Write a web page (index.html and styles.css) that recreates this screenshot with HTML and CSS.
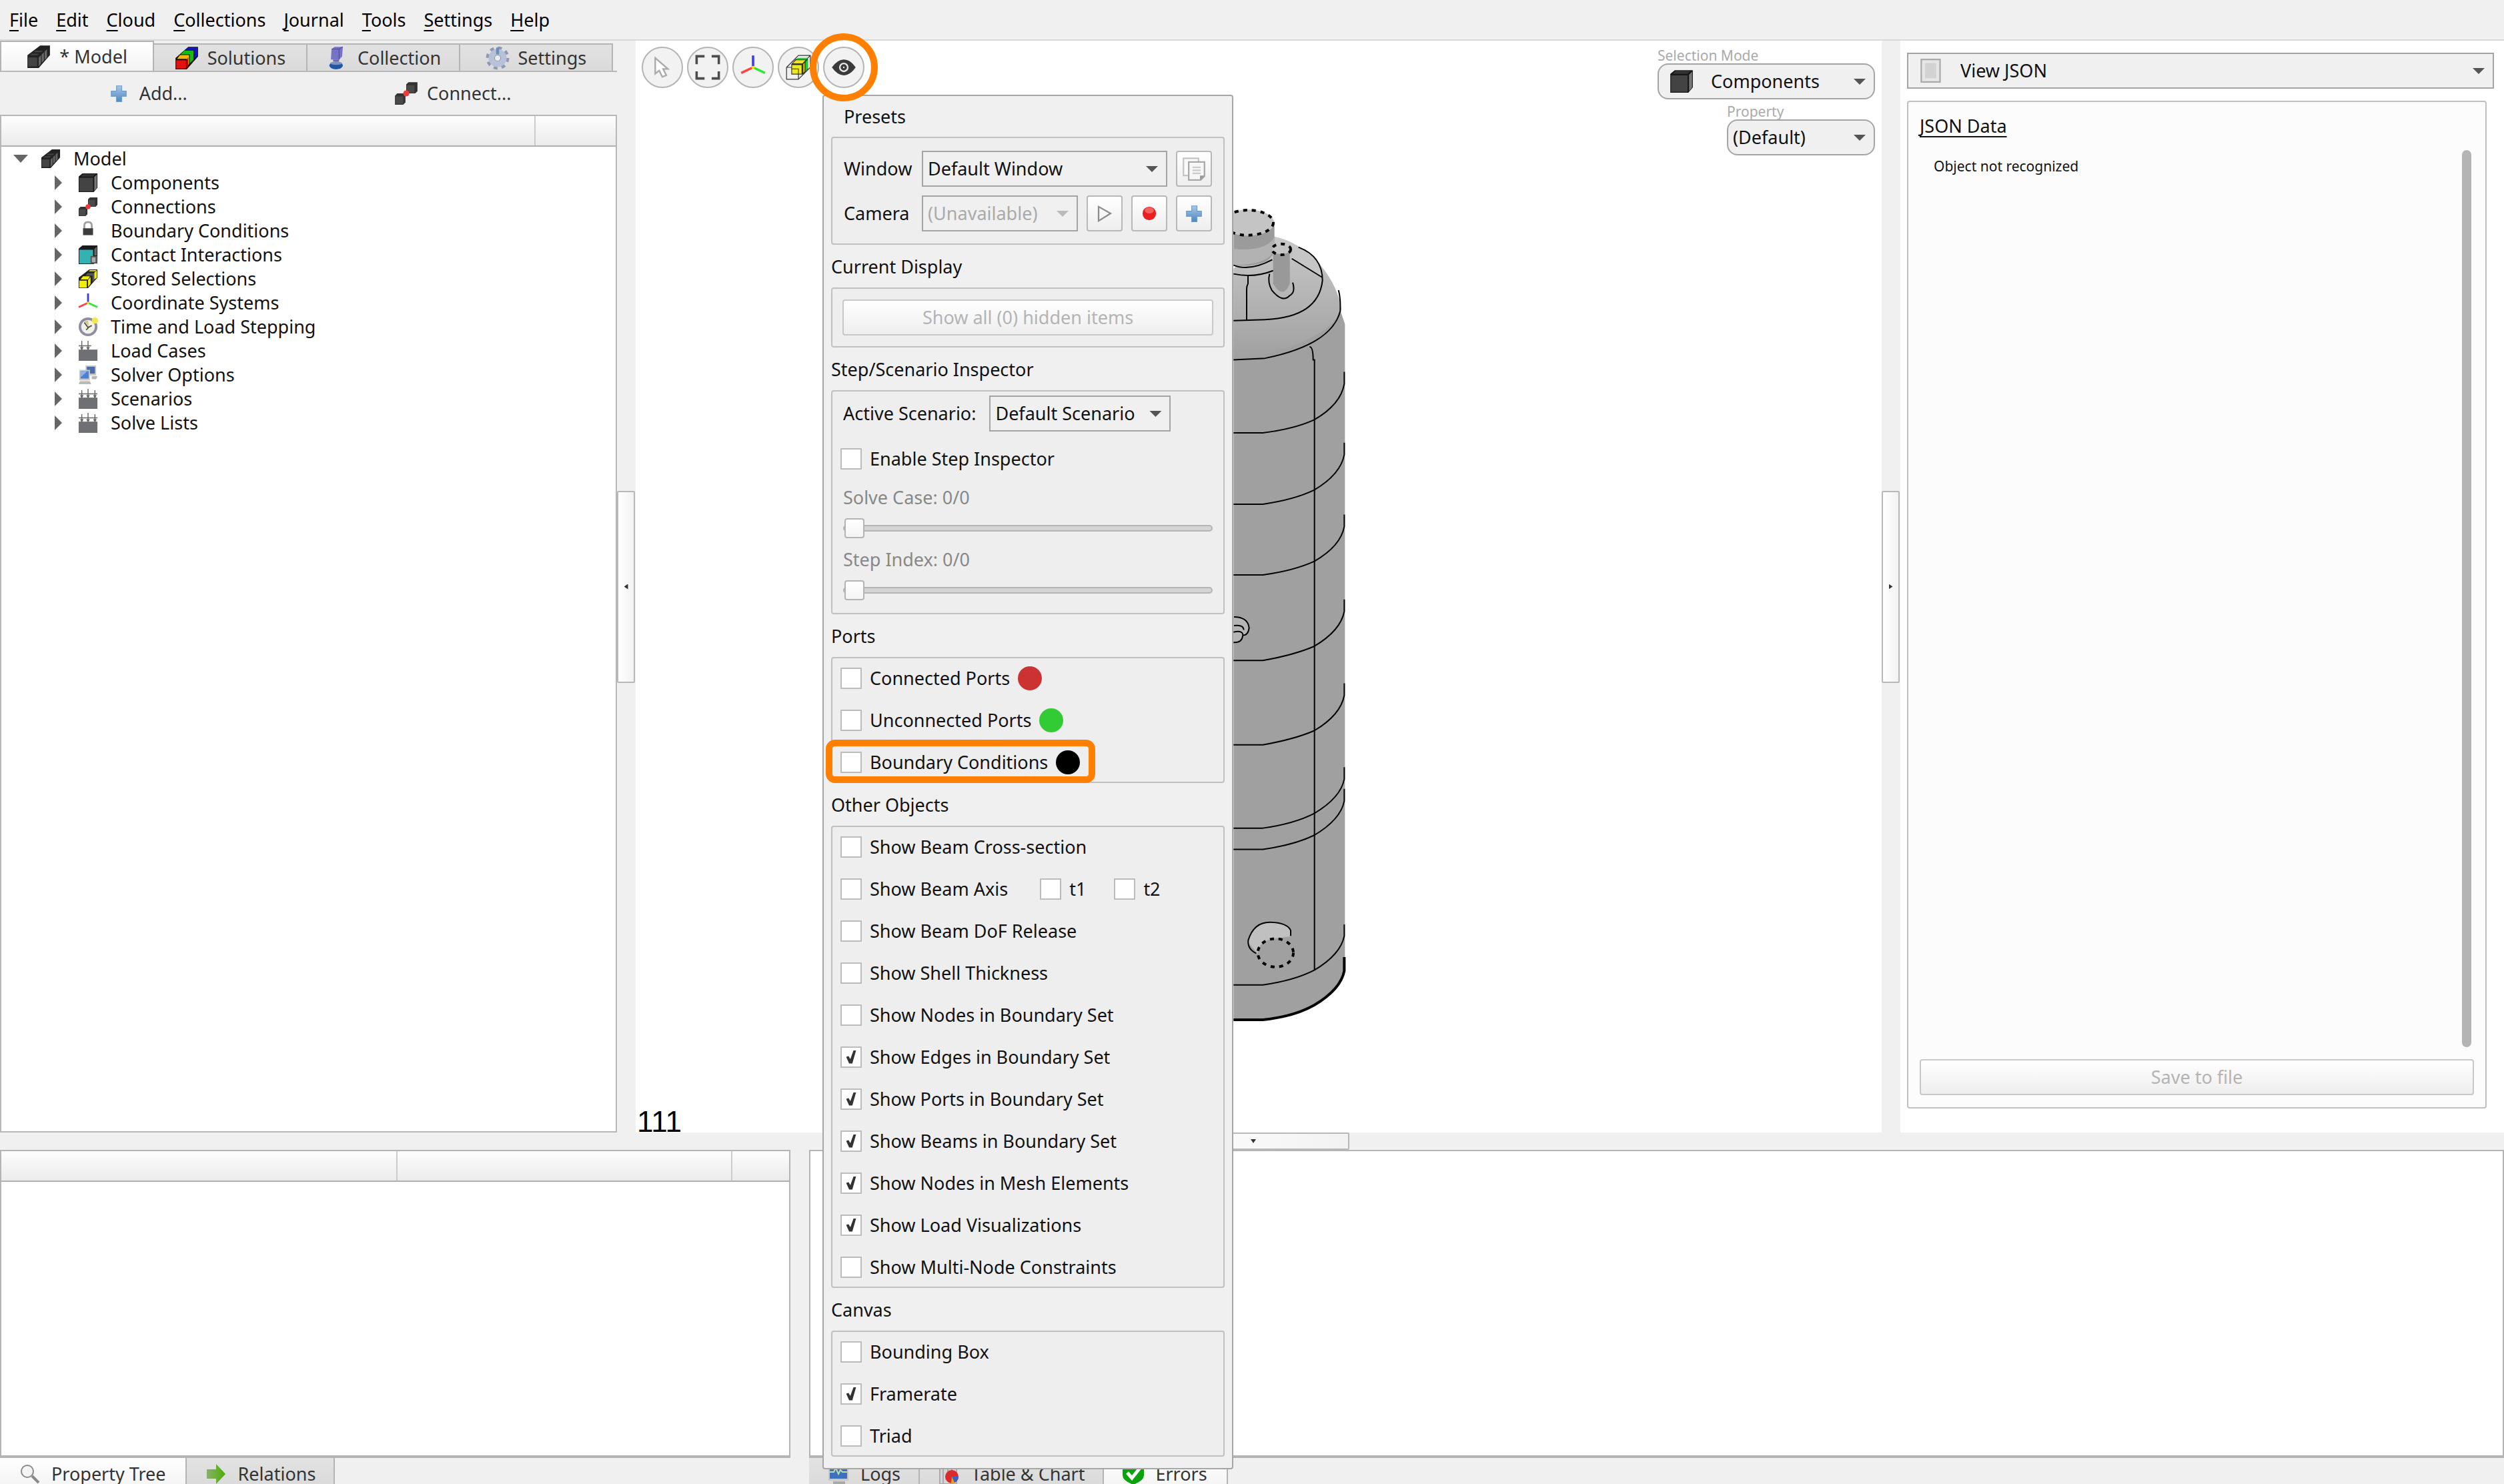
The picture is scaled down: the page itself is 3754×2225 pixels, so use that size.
FILE: index.html
```
<!DOCTYPE html>
<html lang="en">
<head>
<meta charset="utf-8">
<title>Model editor</title>
<link rel="stylesheet" href="styles.css">
</head>
<body>
<svg class="defs" aria-hidden="true">
  <defs>
    <linearGradient id="blue" x1="0" y1="0" x2="0" y2="1"><stop offset="0" stop-color="#a9c8e6"/><stop offset="1" stop-color="#4f86c0"/></linearGradient>
    <linearGradient id="green" x1="0" y1="0" x2="1" y2="0"><stop offset="0" stop-color="#8ab070"/><stop offset="1" stop-color="#4caf00"/></linearGradient>
    <linearGradient id="dome" x1="0" y1="0" x2="0" y2="1"><stop offset="0" stop-color="#c8c8c8"/><stop offset="1" stop-color="#a0a0a0"/></linearGradient>
    <symbol id="i-model" viewBox="0 0 32 32">
      <path d="M1 14 18 1h13v13L16 31H1z" fill="#222"/>
      <path d="M2 17h12v12H2z" fill="#444"/>
      <path d="M16 17v12l3-4V14zM20 13v11l3-3V10zM24 9v11l3-3V6z" fill="#666"/>
      <path d="M4 14l3-2h10l-3 2zM9 10l3-2h10l-3 2z" fill="#444"/>
    </symbol>
    <symbol id="i-solutions" viewBox="0 0 32 32">
      <path d="M1 16 18 1h13v13L16 31H1z" fill="#111"/>
      <path d="M14 5l4-3h12v11l-4 4V5z" fill="#1414d0"/>
      <path d="M8 11l5-5h12v12l-5 5V11z" fill="#10c010"/>
      <path d="M3 17l4-5h12v12l-3 3V17z" fill="#f5b800"/>
      <path d="M2 19h13v11H2z" fill="#e8100c"/><path d="M16 18l2-3v12l-2 2z" fill="#b00"/>
    </symbol>
    <symbol id="i-collection" viewBox="0 0 32 32">
      <path d="M9 4l4-3h11l-1 13-4 4H8z" fill="#7672c8"/><path d="M9 4h10v14M19 4l5-3" fill="none" stroke="#504c98"/>
      <path d="M11 18h8v3h-8z" fill="#6d6ab0"/>
      <ellipse cx="15" cy="26" rx="9" ry="5" fill="#1f56a5"/><ellipse cx="15" cy="23" rx="8" ry="2" fill="#7a93c2"/>
    </symbol>
    <symbol id="i-gear" viewBox="0 0 32 32">
      <circle cx="16" cy="16" r="13" fill="none" stroke="#8f98b3" stroke-width="5" stroke-dasharray="5 5.21"/>
      <circle cx="16" cy="16" r="8" fill="none" stroke="#b9c0da" stroke-width="8"/>
      <circle cx="16" cy="16" r="4" fill="#ececec" stroke="#8f98b3"/>
      <path d="M14 2h4v9h-4z" fill="#6e8fb5"/>
    </symbol>
    <symbol id="i-plus" viewBox="0 0 32 32">
      <path d="M13 6h7v7h6v7h-6v7h-7v-7H6v-7h7z" fill="url(#blue)" stroke="#6f9bc8"/>
    </symbol>
    <symbol id="i-connect" viewBox="0 0 32 32">
      <path d="M16 4l3-3h12v12l-3 3H16z" fill="#333"/><path d="M1 19l3-3h11v12l-3 3H1z" fill="#333"/>
      <path d="M17 5h10v10H17zM2 20h10v10H2z" fill="#4a4a4a"/><circle cx="16" cy="16" r="4" fill="#f03a3a"/>
    </symbol>
    <symbol id="i-cube" viewBox="0 0 32 32">
      <path d="M1 6l6-5h24v23l-6 7H1z" fill="#161616"/><path d="M2 8h22v22H2z" fill="#434343"/>
      <path d="M26 7l4-4v21l-4 5z" fill="#777"/><path d="M4 6l4-4h20l-4 4z" fill="#333"/>
    </symbol>
    <symbol id="i-lock" viewBox="0 0 32 32">
      <path d="M10 13V8q0-6 6-6t6 6v5" fill="none" stroke="#a0a0a0" stroke-width="3"/><path d="M8 12h16v11H8z" fill="#3c3c3c"/>
    </symbol>
    <symbol id="i-contact" viewBox="0 0 32 32">
      <path d="M1 6l6-5h24v23l-6 7H1z" fill="#1b1b1b"/><path d="M2 8h22v22H2z" fill="#33b1b3"/>
      <path d="M26 7l4-4v14h-4z" fill="#666"/><path d="M20 18h11v12H20z" fill="#555"/><path d="M22 20h6v8h-6z" fill="#aaa"/>
    </symbol>
    <symbol id="i-stored" viewBox="0 0 32 32">
      <path d="M1 14 18 1h13v13L16 31H1z" fill="#222"/>
      <path d="M12 11l3-4h11v11l-3 3V11z" fill="#555"/>
      <path d="M2 19h12v11H2zM4 17l4-5h11l-3 5zM16 18l4-5v11l-4 5zM17 4l2-2h11l-2 2zM26 6l4-3v11l-4 3z" fill="#f2ee00"/>
    </symbol>
    <symbol id="i-axes" viewBox="0 0 32 32">
      <g fill="none" stroke-width="3"><path d="M16 16V1" stroke="#3a3af0"/><path d="M16 16 1 23" stroke="#f44"/><path d="M16 16l15 7" stroke="#2de82d"/></g>
      <circle cx="16" cy="16" r="2" fill="#f3e600"/>
    </symbol>
    <symbol id="i-clock" viewBox="0 0 32 32">
      <circle cx="16" cy="16" r="13" fill="#f3f1e6" stroke="#8f8ca5" stroke-width="4"/>
      <path d="M10 9l6 8 6-3M13 21l4-4" fill="none" stroke="#55534a" stroke-width="2"/><path d="M10 7l6-1 1 9z" fill="#d9c77a"/>
      <circle cx="27" cy="6" r="5" fill="#f1e850"/>
    </symbol>
    <symbol id="i-load2" viewBox="0 0 32 32">
      <path d="M1 14h30v18H1z" fill="#6f7074"/><path d="M6 0v14M16 0v14M1 8h20M4 10l2 4 2-4M14 10l2 4 2-4" fill="none" stroke="#666" stroke-width="1.500"/>
    </symbol>
    <symbol id="i-load3" viewBox="0 0 32 32">
      <path d="M1 14h30v18H1z" fill="#6f7074"/><path d="M6 2v12M16 0v14M27 2v12M1 8h30M4 10l2 4 2-4M14 10l2 4 2-4M25 10l2 4 2-4" fill="none" stroke="#666" stroke-width="1.500"/>
    </symbol>
    <symbol id="i-solver" viewBox="0 0 32 32">
      <path d="M12 1h17v16H12z" fill="#c9cac6"/><path d="M14 3h13v11H14z" fill="#4a6ca8"/><path d="M22 18h9l-2 5h-7z" fill="#b5b6b2"/>
      <path d="M2 8h17v17H2z" fill="#c9cac6"/><path d="M4 10h13v12H4z" fill="#4f7fcf"/><path d="M4 10h11L4 20z" fill="#8fb0e4"/><path d="M3 26h16l2 5H1z" fill="#b9bab6"/>
    </symbol>
    <symbol id="i-cursor" viewBox="0 0 32 32">
      <path d="M7 4v20l5-4 4 8 5-2-4-8h6z" fill="#fff" stroke="#aaa" stroke-width="2"/>
    </symbol>
    <symbol id="i-fit" viewBox="0 0 32 32">
      <path d="M2 12V2h10M21 2h9v10M30 21v9h-9M12 30H2v-9" fill="none" stroke="#4c4c4c" stroke-width="3"/>
    </symbol>
    <symbol id="i-view" viewBox="0 0 32 32">
      <path d="M1 16h15v15H1zM1 16 16 1h15v15L16 31M16 16 31 1" fill="#f0f0f0" stroke="#333"/>
      <path d="M7 12l6-7h15v13l-6 7H7z" fill="#333"/><path d="M8 13h12v11H8zM9 11l4-4h12l-4 4z" fill="#efe922"/><path d="M22 12l2-2v11l-2 2z" fill="#c9bd10"/><path d="M25 9l3-3v11l-3 4zM13 6l2-2h13l-2 2z" fill="#1fd03a"/>
      <path d="M7 18h9v7" fill="none" stroke="#55501a"/>
    </symbol>
    <symbol id="i-eye" viewBox="0 0 32 32">
      <path d="M1 16Q8 6 16 6t15 10Q24 26 16 26T1 16z" fill="#3a3a3a"/><circle cx="16" cy="16" r="5" fill="none" stroke="#e8e8e8" stroke-width="2"/><circle cx="16" cy="16" r="1" fill="#e8e8e8"/>
    </symbol>
    <symbol id="i-copy" viewBox="0 0 32 32">
      <path d="M2 2h20v23H2z" fill="#fbfbfb" stroke="#c4c4c4" stroke-width="2"/><path d="M9 7h21v19l-5 5H9z" fill="#f7f7f7" stroke="#a8a8a8" stroke-width="2"/><path d="M14 14h11M14 18h11M14 22h11" stroke="#ccc" stroke-width="2"/><path d="M24 31v-6h6z" fill="#999"/>
    </symbol>
    <symbol id="i-play" viewBox="0 0 32 32"><path d="M8 7v19l16-10z" fill="#f6f6f6" stroke="#8c8c8c" stroke-width="2"/></symbol>
    <symbol id="i-record" viewBox="0 0 32 32"><circle cx="16" cy="16" r="9" fill="#ea2020"/><ellipse cx="16" cy="12" rx="6" ry="4" fill="#f26060"/></symbol>
    <symbol id="i-doc" viewBox="0 0 32 32"><path d="M3 1h25v30H3z" fill="#e6e6e6" stroke="#aaa" stroke-width="2"/><path d="M8 6h15v20H8z" fill="#d2d2d2"/></symbol>
    <symbol id="i-search" viewBox="0 0 32 32"><circle cx="13" cy="12" r="9" fill="#f4f4f4" stroke="#8a8a8a" stroke-width="2"/><path d="M20 19l10 10" stroke="#8a8a8a" stroke-width="4"/></symbol>
    <symbol id="i-arrow" viewBox="0 0 32 32"><path d="M2 9h14V1l14 15-14 15v-8H2z" fill="url(#green)"/></symbol>
    <symbol id="i-logs" viewBox="0 0 32 32"><path d="M1 1h30v25H1z" fill="#c8c8c0"/><path d="M3 3h26v20H3z" fill="#3f70bd"/><path d="M3 13h6l3-6 4 9 3-6 3 3h7" fill="none" stroke="#b8e0a0" stroke-width="2"/><path d="M8 27h18v4H8z" fill="#aaa"/></symbol>
    <symbol id="i-chart" viewBox="0 0 32 32"><path d="M2 1h25v30H2z" fill="#d5d5d5" stroke="#aaa" stroke-width="2"/><path d="M7 2v28M14 2v14M20 2v14" stroke="#aaa" stroke-width="2"/><circle cx="20" cy="20" r="10" fill="#dc2a2a"/><path d="M20 20h10a10 10 0 0 1-6 9z" fill="#3a62c0"/><path d="M20 20l4 9a10 10 0 0 1-5 1z" fill="#e0a820"/></symbol>
    <symbol id="i-ok" viewBox="0 0 32 32"><path d="M3 1h26q3 0 3 3v14q0 8-16 14Q0 26 0 18V4q0-3 3-3z" fill="#0ba30b"/><path d="M7 14l7 8L26 7" fill="none" stroke="#fff" stroke-width="5"/></symbol>
  </defs>
</svg>

<nav class="menubar">
  <a href="#"><u>F</u>ile</a><a href="#"><u>E</u>dit</a><a href="#"><u>C</u>loud</a><a href="#"><u>C</u>ollections</a><a href="#"><u>J</u>ournal</a><a href="#"><u>T</u>ools</a><a href="#"><u>S</u>ettings</a><a href="#"><u>H</u>elp</a>
</nav>

<main class="workspace">
  <section class="sidebar">
    <div class="tabs" role="tablist">
      <button class="tab active" role="tab"><svg><use href="#i-model"/></svg>* Model</button>
      <button class="tab" role="tab"><svg><use href="#i-solutions"/></svg>Solutions</button>
      <button class="tab" role="tab"><svg><use href="#i-collection"/></svg>Collection</button>
      <button class="tab" role="tab"><svg><use href="#i-gear"/></svg>Settings</button>
    </div>
    <div class="actions">
      <button><svg><use href="#i-plus"/></svg>Add...</button>
      <button><svg><use href="#i-connect"/></svg>Connect...</button>
    </div>
    <div class="tree-box">
      <div class="columns tree-columns"><span></span><span></span></div>
      <ul class="tree">
        <li class="root"><i class="open"></i><svg><use href="#i-model"/></svg>Model</li>
        <li><i></i><svg><use href="#i-cube"/></svg>Components</li>
        <li><i></i><svg><use href="#i-connect"/></svg>Connections</li>
        <li><i></i><svg><use href="#i-lock"/></svg>Boundary Conditions</li>
        <li><i></i><svg><use href="#i-contact"/></svg>Contact Interactions</li>
        <li><i></i><svg><use href="#i-stored"/></svg>Stored Selections</li>
        <li><i></i><svg><use href="#i-axes"/></svg>Coordinate Systems</li>
        <li><i></i><svg><use href="#i-clock"/></svg>Time and Load Stepping</li>
        <li><i></i><svg><use href="#i-load2"/></svg>Load Cases</li>
        <li><i></i><svg><use href="#i-solver"/></svg>Solver Options</li>
        <li><i></i><svg><use href="#i-load3"/></svg>Scenarios</li>
        <li><i></i><svg><use href="#i-load3"/></svg>Solve Lists</li>
      </ul>
    </div>
  </section>

  <div class="splitter"><button class="handle" aria-label="Collapse left panel"></button></div>

  <section class="viewport">
    <svg class="tank" viewBox="0 0 720 1568" preserveAspectRatio="none">
      <path d="M58 160 120 95 240 92Q350 100 450 145 530 185 542 232L559 252V1440Q540 1474 421 1503 330 1524 190 1530H58z" fill="#a0a0a0"/>
      <path d="M58 150 240 92Q350 100 450 145 530 185 542 225 480 290 58 318z" fill="url(#dome)"/>
      <path d="M330 108Q460 130 458 168L320 132z" fill="#c6c6c6"/>
      <path d="M58 60v84q80 4 140-6 40-8 44-24V66z" fill="#9b9b9b"/>
      <path d="M58 114q150 6 184-22v22q-20 30-184 30z" fill="#b2b2b2"/>
      <ellipse cx="123" cy="66" rx="118" ry="24" fill="#c4c4c4"/>
      <path d="M236 118h75v60q-30 30-75 0z" fill="#999"/><ellipse cx="273" cy="115" rx="40" ry="9" fill="#c4c4c4"/>
      <g class="edge">
        <path d="M58 144Q130 156 232 134M58 160Q150 168 236 154M123 164v14q-6 4-6 10v56M350 111Q458 128 458 172 440 240 200 244L58 246M320 132L455 166M530 190Q540 205 538 228 500 290 200 315L58 318M400 294q16 0 16 24h6V1438"/>
        <path d="M220 160q-10 16 10 30 48 24 80 10 28-6 14-24"/>
        <path d="M58 452H190Q330 445 421 428 540 400 556 362V340"/>
        <path d="M58 583H190Q330 575 421 557 540 528 556 492V470"/>
        <path d="M58 713H190Q330 705 421 688 540 660 556 624V602"/>
        <path d="M58 870H190Q330 860 421 844 540 815 556 780V758"/>
        <path d="M58 1025H190Q330 1015 421 999 540 970 556 934V912"/>
        <path d="M58 1178H190Q330 1170 421 1151 540 1122 556 1088V1066"/>
        <path d="M58 1217H190Q330 1209 421 1191 540 1162 556 1128V1106"/>
        <path d="M58 1466H190Q330 1458 421 1439 540 1410 556 1376V1355"/>
      </g>
      <path class="edge thick" d="M58 1530H190Q330 1524 421 1503 540 1474 556 1440V1415"/>
      <path d="M58 790h40q32 6 30 20l-30 22-40 6z" fill="#b5b5b5"/>
      <path class="edge" d="M60 790q62 0 68 20-4 14-28 14M60 806q42-2 44 8M58 818q42-4 42 6-4 14-42 13"/>
      <path d="M124 1388q20-36 100-37 80 2 90 14v12l-80 4-66 28z" fill="#c0c0c0"/>
      <path class="edge" d="M160 1408Q120 1400 124 1384 150 1350 225 1351 300 1352 315 1366v10"/>
      <g class="edge bolts"><ellipse cx="123" cy="66" rx="114" ry="23"/><ellipse cx="273" cy="115" rx="42" ry="10"/><ellipse cx="247" cy="1407" rx="80" ry="26" fill="#a0a0a0"/></g>
    </svg>

    <div class="toolbar">
      <button disabled aria-label="Select"><svg><use href="#i-cursor"/></svg></button>
      <button aria-label="Fit view"><svg><use href="#i-fit"/></svg></button>
      <button aria-label="Axes"><svg><use href="#i-axes"/></svg></button>
      <button aria-label="View cube"><svg><use href="#i-view"/></svg></button>
      <button class="marked" aria-label="Visibility"><svg><use href="#i-eye"/></svg></button>
    </div>

    <div class="selection">
      <label for="mode">Selection Mode</label>
      <div class="combo round mode"><svg><use href="#i-cube"/></svg><select id="mode"><option>Components</option></select></div>
      <div class="property">
        <label for="property">Property</label>
        <div class="combo round"><select id="property"><option>(Default)</option></select></div>
      </div>
    </div>

    <output class="framerate">111</output>

    <form class="popup">
      <h2 class="indent">Presets</h2>
      <div class="group presets">
        <label for="win">Window</label>
        <div class="combo"><select id="win"><option>Default Window</option></select></div>
        <button type="button" class="push" aria-label="Copy window"><svg><use href="#i-copy"/></svg></button>
        <label for="cam">Camera</label>
        <div class="combo off"><select id="cam" disabled><option>(Unavailable)</option></select></div>
        <button type="button" class="push" aria-label="Play"><svg><use href="#i-play"/></svg></button>
        <button type="button" class="push" aria-label="Record"><svg><use href="#i-record"/></svg></button>
        <button type="button" class="push" aria-label="Add camera"><svg><use href="#i-plus"/></svg></button>
      </div>
      <h2>Current Display</h2>
      <div class="group display"><button type="button" class="push" disabled>Show all (0) hidden items</button></div>
      <h2>Step/Scenario Inspector</h2>
      <div class="group inspector">
        <div class="scenario"><label for="scn">Active Scenario:</label><div class="combo"><select id="scn"><option>Default Scenario</option></select></div></div>
        <label class="check"><input type="checkbox">Enable Step Inspector</label>
        <label class="slide">Solve Case: 0/0<input type="range" value="0" disabled></label>
        <label class="slide">Step Index: 0/0<input type="range" value="0" disabled></label>
      </div>
      <h2>Ports</h2>
      <div class="group list">
        <label class="check"><input type="checkbox">Connected Ports<b class="dot red"></b></label>
        <label class="check"><input type="checkbox">Unconnected Ports<b class="dot green"></b></label>
        <label class="check marked-row"><input type="checkbox">Boundary Conditions<b class="dot"></b></label>
      </div>
      <h2>Other Objects</h2>
      <div class="group list">
        <label class="check"><input type="checkbox">Show Beam Cross-section</label>
        <div class="axis-row">
          <label class="check"><input type="checkbox">Show Beam Axis</label>
          <label class="check"><input type="checkbox">t1</label>
          <label class="check"><input type="checkbox">t2</label>
        </div>
        <label class="check"><input type="checkbox">Show Beam DoF Release</label>
        <label class="check"><input type="checkbox">Show Shell Thickness</label>
        <label class="check"><input type="checkbox">Show Nodes in Boundary Set</label>
        <label class="check"><input type="checkbox" checked>Show Edges in Boundary Set</label>
        <label class="check"><input type="checkbox" checked>Show Ports in Boundary Set</label>
        <label class="check"><input type="checkbox" checked>Show Beams in Boundary Set</label>
        <label class="check"><input type="checkbox" checked>Show Nodes in Mesh Elements</label>
        <label class="check"><input type="checkbox" checked>Show Load Visualizations</label>
        <label class="check"><input type="checkbox">Show Multi-Node Constraints</label>
      </div>
      <h2>Canvas</h2>
      <div class="group list">
        <label class="check"><input type="checkbox">Bounding Box</label>
        <label class="check"><input type="checkbox" checked>Framerate</label>
        <label class="check"><input type="checkbox">Triad</label>
      </div>
    </form>
  </section>

  <div class="splitter"><button class="handle right" aria-label="Collapse right panel"></button></div>

  <section class="inspector-panel">
    <div class="combo json-combo"><svg><use href="#i-doc"/></svg><select aria-label="View"><option>View JSON</option></select></div>
    <div class="json">
      <h2>JSON Data</h2>
      <div class="json-body"><p>Object not recognized</p><span class="thumb"></span></div>
      <button class="push" disabled>Save to file</button>
    </div>
  </section>
</main>

<div class="splitter horizontal"><button class="handle" aria-label="Collapse bottom panel"></button></div>

<footer class="bottom">
  <section class="props">
    <div class="pane"><div class="columns prop-columns"><span></span><span></span><span></span></div></div>
    <div class="tabs low" role="tablist">
      <button class="tab active" role="tab"><svg><use href="#i-search"/></svg>Property Tree</button>
      <button class="tab" role="tab"><svg><use href="#i-arrow"/></svg>Relations</button>
    </div>
  </section>
  <section class="output">
    <div class="pane"></div>
    <div class="tabs low" role="tablist">
      <button class="tab" role="tab"><svg><use href="#i-logs"/></svg>Logs</button>
      <button class="tab" role="tab"><svg><use href="#i-chart"/></svg>Table &amp; Chart</button>
      <button class="tab active" role="tab"><svg><use href="#i-ok"/></svg>Errors</button>
    </div>
  </section>
</footer>
</body>
</html>
```
FILE: styles.css
```
*, *::before, *::after { box-sizing: border-box; }

body {
  margin: 0;
  height: 100vh;
  display: flex;
  flex-direction: column;
  overflow: hidden;
  background: #f0f0f0;
  color: #111;
  font: 27px/36px "Noto Sans", "Open Sans", sans-serif;
}

button, select, input { font: inherit; color: inherit; margin: 0; }
button { padding: 0; }
h2, p, ul { margin: 0; padding: 0; font: inherit; }
.defs { position: absolute; width: 0; height: 0; }

/* Menu bar */
.menubar {
  display: flex;
  gap: 27px;
  padding: 12px 14px 11px;
  border-bottom: 2px solid #d8d8d8;
}
.menubar a { color: #000; text-decoration: none; }
.menubar u { text-underline-offset: 5px; text-decoration-thickness: 2px; }

/* Main row */
.workspace { flex: 1; min-height: 0; display: flex; }
.sidebar { width: 925px; display: flex; flex-direction: column; }

.tabs { display: flex; align-items: flex-end; height: 47px; padding-right: 6px; border-bottom: 2px solid #b8b8b8; }
.tab {
  flex: 1;
  height: 41px;
  display: flex;
  align-items: center;
  justify-content: center;
  gap: 13px;
  background: linear-gradient(#e2e2e2, #dadada);
  border: 0 solid #b4b4b4;
  border-width: 2px 2px 0 0;
  color: #333;
}
.tab svg, .actions svg { width: 36px; height: 36px; }
.tab.active { height: 45px; background: linear-gradient(#fff, #f3f3f3); border-left-width: 2px; }

.actions { display: flex; padding-right: 26px; height: 64px; }
.actions button {
  flex: 1;
  display: flex;
  align-items: center;
  justify-content: center;
  gap: 13px;
  border: 0;
  background: none;
  color: #333;
}
.actions button:first-child { padding-right: 18px; }

.tree-box { flex: 1; border: 2px solid #b8b8b8; background: #fff; }
.columns { display: grid; height: 46px; background: linear-gradient(#fdfdfd, #ebebeb); border-bottom: 2px solid #b0b0b0; }
.columns span + span { border-left: 2px solid #ccc; }
.tree-columns { grid-template-columns: 1fr 122px; }
.tree { list-style: none; }
.tree li { display: flex; align-items: center; height: 36px; padding-left: 80px; }
.tree .root { padding-left: 18px; }
.tree i { width: 11px; height: 22px; margin-right: 24px; background: #666; clip-path: polygon(0 0, 100% 50%, 0 100%); }
.tree .open { width: 22px; height: 12px; margin-right: 19px; clip-path: polygon(0 0, 100% 0, 50% 100%); }
.tree svg { width: 30px; height: 30px; margin-right: 19px; }

/* Splitters */
.splitter { width: 28px; display: flex; align-items: center; }
.handle {
  width: 27px;
  height: 288px;
  display: grid;
  place-items: center;
  border: 2px solid #b8b8b8;
  border-radius: 2px;
  background: linear-gradient(90deg, #fff, #f2f2f2);
}
.handle::before { content: ""; width: 6px; height: 8px; background: #333; clip-path: polygon(0 50%, 100% 0, 100% 100%); }
.handle.right::before { clip-path: polygon(0 0, 100% 50%, 0 100%); }
.horizontal { width: auto; height: 26px; padding-left: 4px; justify-content: center; }
.horizontal .handle { width: 288px; height: 26px; }
.horizontal .handle::before { width: 8px; height: 6px; clip-path: polygon(0 0, 100% 0, 50% 100%); }

/* 3D view */
.viewport { flex: 1; position: relative; background: #fff; }
.tank { position: absolute; left: 877px; top: 219px; width: 240px; height: 1280px; }
.edge { fill: none; stroke: #000; stroke-width: 2px; }
.edge, .edge * { vector-effect: non-scaling-stroke; }
.thick { stroke-width: 4px; }
.bolts { stroke-width: 4px; stroke-dasharray: 6 7; }

.toolbar { position: absolute; left: 9px; top: 9px; display: flex; gap: 6px; }
.toolbar button {
  width: 62px;
  height: 62px;
  display: grid;
  place-items: center;
  border: 2px solid #b4b4b4;
  border-radius: 50%;
  background: #f2f2f2;
}
.toolbar svg { width: 38px; height: 38px; }
.toolbar .marked { position: relative; }
.toolbar { z-index: 3; }
.marked::after {
  content: "";
  position: absolute;
  inset: -22px;
  border: 10px solid #ff8000;
  border-radius: 50%;
}

.selection { position: absolute; right: 10px; top: 8px; width: 326px; color: #111; }
.selection label { display: block; height: 26px; font-size: 21px; line-height: 28px; color: #aaa; }
.property { width: 222px; margin: 4px 0 0 auto; }

.combo {
  position: relative;
  display: flex;
  align-items: center;
  height: 54px;
  border: 2px solid #a4a4a4;
  background: #f0f0f0;
}
.combo::after {
  content: "";
  position: absolute;
  right: 12px;
  top: 21px;
  width: 18px;
  height: 9px;
  background: #555;
  clip-path: polygon(0 0, 100% 0, 50% 100%);
  pointer-events: none;
}
.combo select {
  appearance: none;
  flex: 1;
  min-width: 0;
  height: 100%;
  padding: 0 0 0 7px;
  border: 0;
  background: none;
}
.combo svg { width: 36px; height: 36px; margin: 0 19px 0 16px; }
.round { border-radius: 16px; }
.off::after { background: #bbb; }
.off select { color: #aaa; opacity: 1; }

.framerate { position: absolute; left: 2px; bottom: -8px; font: 44px/48px "Liberation Sans", sans-serif; color: #000; }

/* Display options popup */
.popup {
  position: absolute;
  z-index: 2;
  left: 280px;
  top: 81px;
  width: 616px;
  padding: 0 11px 17px;
  border: 2px solid #a6a6a6;
  border-radius: 4px;
  background: #f0f0f0;
}
.popup h2 { height: 64px; line-height: 66px; }
.popup .indent { height: 61px; line-height: 62px; padding-left: 19px; }
.group { border: 2px solid #c0c0c0; border-radius: 4px; background: #eee; }
.push {
  display: grid;
  place-items: center;
  height: 54px;
  border: 2px solid #b8b8b8;
  border-radius: 4px;
  background: linear-gradient(#fff, #eee);
}
.push:disabled { color: #b4b4b4; border-color: #c8c8c8; }
.push svg { width: 36px; height: 36px; }

.presets {
  display: grid;
  grid-template-columns: 104px 1fr 54px 54px 54px;
  gap: 13px;
  align-items: center;
  padding: 19px 17px 18px;
}
.presets .combo:not(.off) { grid-column: 2 / 5; }

.display { padding: 16px 15px; }
.display .push { width: 100%; }

.inspector { height: 336px; padding: 6px 16px 0; }
.scenario { display: flex; align-items: center; gap: 20px; }
.scenario .combo { width: 272px; }
.inspector .check { margin: 9px 0 9px -4px; }
.slide { display: block; height: 93px; color: #888; }
.slide input {
  appearance: none;
  display: block;
  width: 100%;
  height: 10px;
  margin: 23px 0 0;
  border: 2px solid #b4b4b4;
  border-radius: 5px;
  background: #d4d4d4;
}
.slide input::-webkit-slider-thumb {
  appearance: none;
  box-sizing: border-box;
  width: 30px;
  height: 30px;
  border: 2px solid #b4b4b4;
  border-radius: 4px;
  background: linear-gradient(#fff, #f4f4f4);
}

.list { margin-bottom: 0; padding: 0 12px; }
.check { display: flex; align-items: center; height: 63px; gap: 12px; }
.list > .check:first-child { margin-top: -2px; }
.list > .check:last-child { margin-bottom: -2px; }
.check input {
  appearance: none;
  width: 32px;
  height: 32px;
  display: grid;
  place-items: center;
  border: 2px solid #bcbcbc;
  background: #fff;
}
.check input:checked::before {
  content: "";
  width: 15px;
  height: 20px;
  background: #333;
  clip-path: polygon(0 50%, 25% 45%, 42% 68%, 75% 0, 100% 0, 62% 100%, 30% 100%);
}
.dot { width: 36px; height: 36px; border-radius: 50%; background: #000; }
.red { background: #cb3333; }
.green { background: #33cb33; }
.marked-row { position: relative; }
.marked-row::after {
  content: "";
  position: absolute;
  inset: -2px auto 0 -22px;
  width: 404px;
  border: 10px solid #ff8000;
  border-radius: 14px;
}
.axis-row { display: flex; gap: 42px; }
.axis-row .check:first-child { padding-right: 6px; }

/* Right panel */
.inspector-panel { width: 905px; display: flex; flex-direction: column; gap: 18px; padding: 18px 15px 36px 10px; background: #fff; }
.json-combo svg { margin: 0 26px 0 16px; }
.json-combo select { padding: 0; }
.json {
  flex: 1;
  margin-right: 11px;
  display: flex;
  flex-direction: column;
  padding: 18px 17px;
  border: 2px solid #c0c0c0;
  border-radius: 4px;
  background: #fcfcfc;
}
.json h2 { text-decoration: underline; text-decoration-thickness: 2px; text-underline-offset: 5px; text-decoration-skip-ink: none; }
.json-body { flex: 1; display: flex; justify-content: space-between; padding: 18px 4px 18px 21px; font-size: 21px; }
.json-body p { padding-top: 6px; }
.thumb { width: 14px; border-radius: 7px; background: #b4b4b4; }

/* Bottom row */
.bottom { height: 501px; flex: none; display: flex; gap: 28px; }
.props { width: 1185px; }
.output { flex: 1; }
.pane { height: 462px; border: 2px solid #b4b4b4; border-bottom-width: 4px; background: #fff; }
.prop-columns { grid-template-columns: 592px 1fr 87px; }
.low { align-items: flex-start; border: 0; height: 45px; }
.low .tab { flex: none; height: 45px; padding: 3px 27px 0 26px; gap: 15px; border-width: 0 2px 0 0; }
.low .tab.active { padding-right: 29px; }
.low svg { height: 32px; }
```
